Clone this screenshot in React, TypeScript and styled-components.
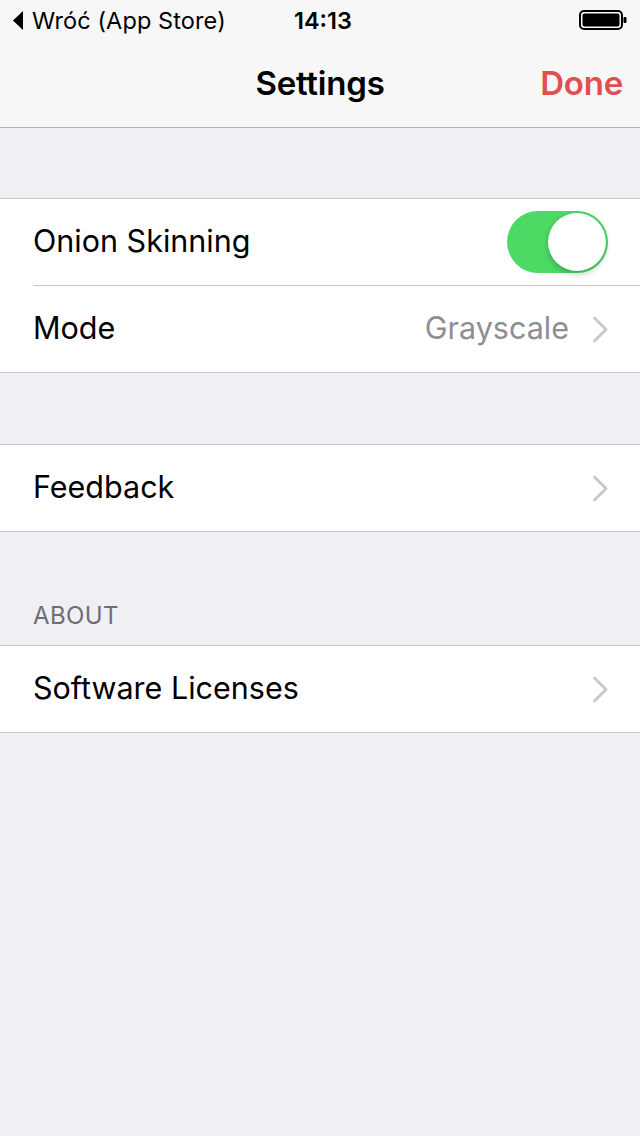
import React from 'react';
import styled, { createGlobalStyle } from 'styled-components';

const GlobalStyle = createGlobalStyle`
  html, body {
    margin: 0;
    padding: 0;
    background: #efeff4;
    font-family: Inter, "Noto Sans", "Liberation Sans", sans-serif;
    -webkit-font-smoothing: antialiased;
  }
`;

const Screen = styled.div`
  width: 640px;
  min-height: 1136px;
  background: #efeff4;
  display: flex;
  flex-direction: column;
`;

const Header = styled.div`
  background: #f7f7f7;
  border-bottom: 1px solid #b2b2b2;
`;

const StatusBar = styled.div`
  height: 40px;
  display: grid;
  grid-template-columns: 1fr auto 1fr;
  align-items: center;
  padding: 0 13px;
  color: #000;
`;

const BackLink = styled.div`
  display: flex;
  align-items: center;
  gap: 9px;
  font-size: 23.5px;
  letter-spacing: 0.1px;
`;

const Clock = styled.div`
  font-size: 23.5px;
  font-weight: 600;
  margin-left: 6px;
`;

const Battery = styled.div`
  justify-self: end;
  display: flex;
  align-items: center;
`;

const NavBar = styled.div`
  height: 87px;
  display: grid;
  grid-template-columns: 1fr auto 1fr;
  align-items: center;
  padding: 0 17px;
`;

const Title = styled.div`
  font-size: 33px;
  font-weight: 600;
  letter-spacing: -0.2px;
  margin-top: -2px;
`;

const DoneButton = styled.div`
  justify-self: end;
  font-size: 33px;
  font-weight: 600;
  color: #e05050;
  letter-spacing: -0.2px;
  margin-top: -2px;
`;

const Group = styled.div<{ $gap: number }>`
  margin-top: ${(p) => p.$gap}px;
  background: #fff;
  border-top: 1px solid #c8c7cc;
  border-bottom: 1px solid #c8c7cc;
`;

const SectionTitle = styled.div`
  margin-top: 69px;
  padding: 0 33px 15px;
  font-size: 24px;
  color: #6d6d72;
  letter-spacing: 0.4px;
`;

const Row = styled.div<{ $divider?: boolean }>`
  height: 86px;
  display: flex;
  align-items: center;
  margin-left: 33px;
  padding-right: 32px;
  border-top: ${(p) => (p.$divider ? '1px solid #c8c7cc' : 'none')};
`;

const Label = styled.div`
  flex: 1;
  font-size: 30.5px;
  color: #000;
  margin-top: -3px;
`;

const Value = styled.div`
  font-size: 30.5px;
  color: #8e8e93;
  margin-right: 23px;
  margin-top: -3px;
`;

const Toggle = styled.div<{ $on: boolean }>`
  width: 101px;
  height: 62px;
  border-radius: 31px;
  background: ${(p) => (p.$on ? '#4cd964' : '#e5e5ea')};
  position: relative;
`;

const Knob = styled.div<{ $on: boolean }>`
  position: absolute;
  top: 2px;
  left: ${(p) => (p.$on ? '41px' : '2px')};
  width: 58px;
  height: 58px;
  border-radius: 50%;
  background: #fff;
  box-shadow: 0 3px 6px rgba(0, 0, 0, 0.22), 0 0 0 0.5px rgba(0, 0, 0, 0.06);
`;

const Chevron = () => (
  <svg width="16" height="27" viewBox="0 0 16 27">
    <path d="M2.5 2 L14 13.5 L2.5 25" fill="none" stroke="#c7c7cc" strokeWidth="2.8" strokeLinecap="round" strokeLinejoin="round" />
  </svg>
);

const App: React.FC = () => (
  <Screen>
    <GlobalStyle />
    <Header>
      <StatusBar>
        <BackLink>
          <svg width="10" height="19" viewBox="0 0 10 19">
            <path d="M10 0 L0 9.5 L10 19 Z" fill="#000" />
          </svg>
          Wróć (App Store)
        </BackLink>
        <Clock>14:13</Clock>
        <Battery>
          <svg width="48" height="20" viewBox="0 0 48 20">
            <rect x="1" y="1" width="42" height="18" rx="4" fill="none" stroke="#000" strokeWidth="2" />
            <rect x="3.5" y="3.5" width="37" height="13" rx="2" fill="#000" />
            <rect x="44.5" y="7" width="3" height="6" rx="1" fill="#000" />
          </svg>
        </Battery>
      </StatusBar>
      <NavBar>
        <div />
        <Title>Settings</Title>
        <DoneButton>Done</DoneButton>
      </NavBar>
    </Header>

    <Group $gap={70}>
      <Row>
        <Label>Onion Skinning</Label>
        <Toggle $on>
          <Knob $on />
        </Toggle>
      </Row>
      <Row $divider>
        <Label>Mode</Label>
        <Value>Grayscale</Value>
        <Chevron />
      </Row>
    </Group>

    <Group $gap={71}>
      <Row>
        <Label>Feedback</Label>
        <Chevron />
      </Row>
    </Group>

    <SectionTitle>ABOUT</SectionTitle>
    <Group $gap={0}>
      <Row>
        <Label>Software Licenses</Label>
        <Chevron />
      </Row>
    </Group>
  </Screen>
);

export default App;
